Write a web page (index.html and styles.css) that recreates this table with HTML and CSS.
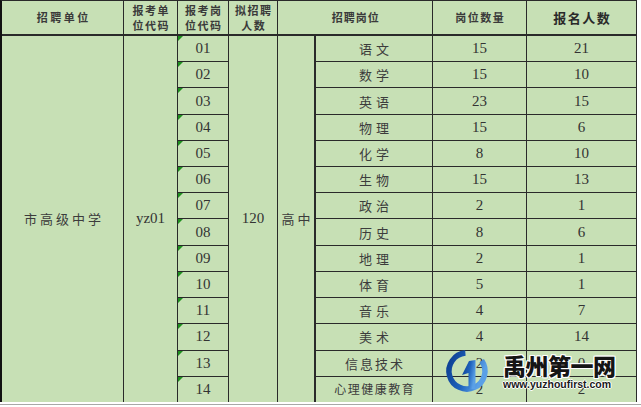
FILE: index.html
```html
<!DOCTYPE html>
<html lang="zh-CN">
<head>
<meta charset="utf-8">
<title>招聘岗位表</title>
<link rel="stylesheet" href="styles.css">
</head>
<body>
<div class="page">
  <div class="sheet">
    <div class="c h h-wide">招聘单位</div>
    <div class="c h">报考单<br>位代码</div>
    <div class="c h">报考岗<br>位代码</div>
    <div class="c h">拟招聘<br>人数</div>
    <div class="c h h-post">招聘岗位</div>
    <div class="c h h-num">岗位数量</div>
    <div class="c h h-big">报名人数</div>

    <div class="c cjk span">市高级中学</div>
    <div class="c span">yz01</div>
    <div class="c code">01</div>
    <div class="c span">120</div>
    <div class="c cjk span">高中</div>
    <div class="c cjk subj">语文</div><div class="c">15</div><div class="c">21</div>

    <div class="c code">02</div><div class="c cjk subj">数学</div><div class="c">15</div><div class="c">10</div>
    <div class="c code">03</div><div class="c cjk subj">英语</div><div class="c">23</div><div class="c">15</div>
    <div class="c code">04</div><div class="c cjk subj">物理</div><div class="c">15</div><div class="c">6</div>
    <div class="c code">05</div><div class="c cjk subj">化学</div><div class="c">8</div><div class="c">10</div>
    <div class="c code">06</div><div class="c cjk subj">生物</div><div class="c">15</div><div class="c">13</div>
    <div class="c code">07</div><div class="c cjk subj">政治</div><div class="c">2</div><div class="c">1</div>
    <div class="c code">08</div><div class="c cjk subj">历史</div><div class="c">8</div><div class="c">6</div>
    <div class="c code">09</div><div class="c cjk subj">地理</div><div class="c">2</div><div class="c">1</div>
    <div class="c code">10</div><div class="c cjk subj">体育</div><div class="c">5</div><div class="c">1</div>
    <div class="c code">11</div><div class="c cjk subj">音乐</div><div class="c">4</div><div class="c">7</div>
    <div class="c code">12</div><div class="c cjk subj">美术</div><div class="c">4</div><div class="c">14</div>
    <div class="c code">13</div><div class="c cjk subj sm">信息技术</div><div class="c">2</div><div class="c">0</div>
    <div class="c code">14</div><div class="c cjk subj xs">心理健康教育</div><div class="c">2</div><div class="c">2</div>
  </div>
  <div class="foot"></div>

  <div class="mark">
    <svg class="logo" width="46" height="46" viewBox="0 0 46 46" aria-hidden="true">
      <defs>
        <linearGradient id="g" x1="0" y1="0" x2="1" y2="0.4">
          <stop offset="0" stop-color="#0b3c8f"/>
          <stop offset="0.6" stop-color="#1f63bd"/>
          <stop offset="1" stop-color="#5aa0e6"/>
        </linearGradient>
      </defs>
      <path d="M37.7 12.7 A18 18 0 1 1 21.4 5.1" fill="none" stroke="url(#g)" stroke-width="5.5"/>
      <polygon points="25,13 31.5,12 31.5,41 24.5,41 24.5,25 18,27" fill="url(#g)"/>
    </svg>
    <div class="brand">
      <div class="brand-name">禹州第一网</div>
      <div class="brand-url">www.yuzhoufirst.com</div>
    </div>
  </div>
</div>
</body>
</html>
```

FILE: styles.css
```css
html, body {
  margin: 0;
  padding: 0;
  background: #ffffff;
}

.page {
  position: relative;
  width: 641px;
  height: 407px;
  overflow: hidden;
}

.sheet {
  display: grid;
  grid-template-columns: 121px 53px 50px 48px 36px 117px 93px 109px;
  grid-template-rows: 34px repeat(14, 1fr);
  gap: 1px;
  width: 637px;
  height: 402px;
  box-sizing: border-box;
  background: #2a2a2a;
  border-left: 2px solid #111;
  border-top: 1px solid #2a2a2a;
  border-right: 1px solid #2a2a2a;
}

.c {
  background: #c7e0b5;
  display: flex;
  align-items: center;
  justify-content: center;
  text-align: center;
  color: #333;
  font-family: "Liberation Serif", "Noto Sans CJK SC", serif;
  font-size: 15px;
  line-height: 1;
}

.h {
  font-family: "Noto Sans CJK SC", sans-serif;
  font-weight: 700;
  font-size: 11px;
  letter-spacing: 1.5px;
  line-height: 15px;
  color: #3a3a3a;
  border-bottom: 1px solid #2a2a2a;
  padding-left: 1.5px;
}

.h-wide {
  letter-spacing: 2.5px;
  padding-left: 2.5px;
}

.h-post {
  grid-column: span 2;
  letter-spacing: 1px;
}

.h-big {
  font-size: 13px;
  letter-spacing: 1.5px;
  color: #2a2a2a;
}

.span {
  grid-row: span 14;
}

.cjk {
  font-family: "Noto Sans CJK SC", sans-serif;
  font-size: 13px;
  letter-spacing: 3px;
  padding-left: 3px;
  color: #3c3c3c;
}

.subj {
  border-left: 1px solid #2a2a2a;
  letter-spacing: 4px;
  padding-left: 4px;
}

.subj.sm {
  letter-spacing: 2px;
  padding-left: 2px;
}

.subj.xs {
  font-size: 12px;
  letter-spacing: 1.5px;
  padding-left: 1.5px;
}

.code {
  position: relative;
}

.code::before {
  content: "";
  position: absolute;
  left: 0;
  top: 0;
  width: 0;
  height: 0;
  border-top: 5px solid #1f8f1f;
  border-right: 5px solid transparent;
}

.foot {
  width: 641px;
  margin-top: 2px;
  border-top: 1px solid #a8a8a8;
}

.mark {
  position: absolute;
  left: 444px;
  top: 348px;
  display: flex;
  align-items: flex-start;
  gap: 13px;
}

.logo {
  display: block;
}

.brand {
  display: flex;
  flex-direction: column;
  padding-top: 4px;
}

.brand-name {
  font-family: "Noto Sans CJK SC", sans-serif;
  font-weight: 900;
  font-size: 23px;
  line-height: 26px;
  letter-spacing: -0.5px;
  color: #151515;
  text-shadow: 1px 0 0 #fff, -1px 0 0 #fff, 0 1px 0 #fff, 0 -1px 0 #fff,
    1px 1px 0 #fff, -1px -1px 0 #fff, 1px -1px 0 #fff, -1px 1px 0 #fff;
}

.brand-url {
  font-family: "Liberation Sans", Arial, sans-serif;
  font-weight: 700;
  font-size: 10.5px;
  line-height: 12px;
  color: #1a1a1a;
  text-shadow: 1px 0 0 #fff, -1px 0 0 #fff, 0 1px 0 #fff, 0 -1px 0 #fff;
}
```
